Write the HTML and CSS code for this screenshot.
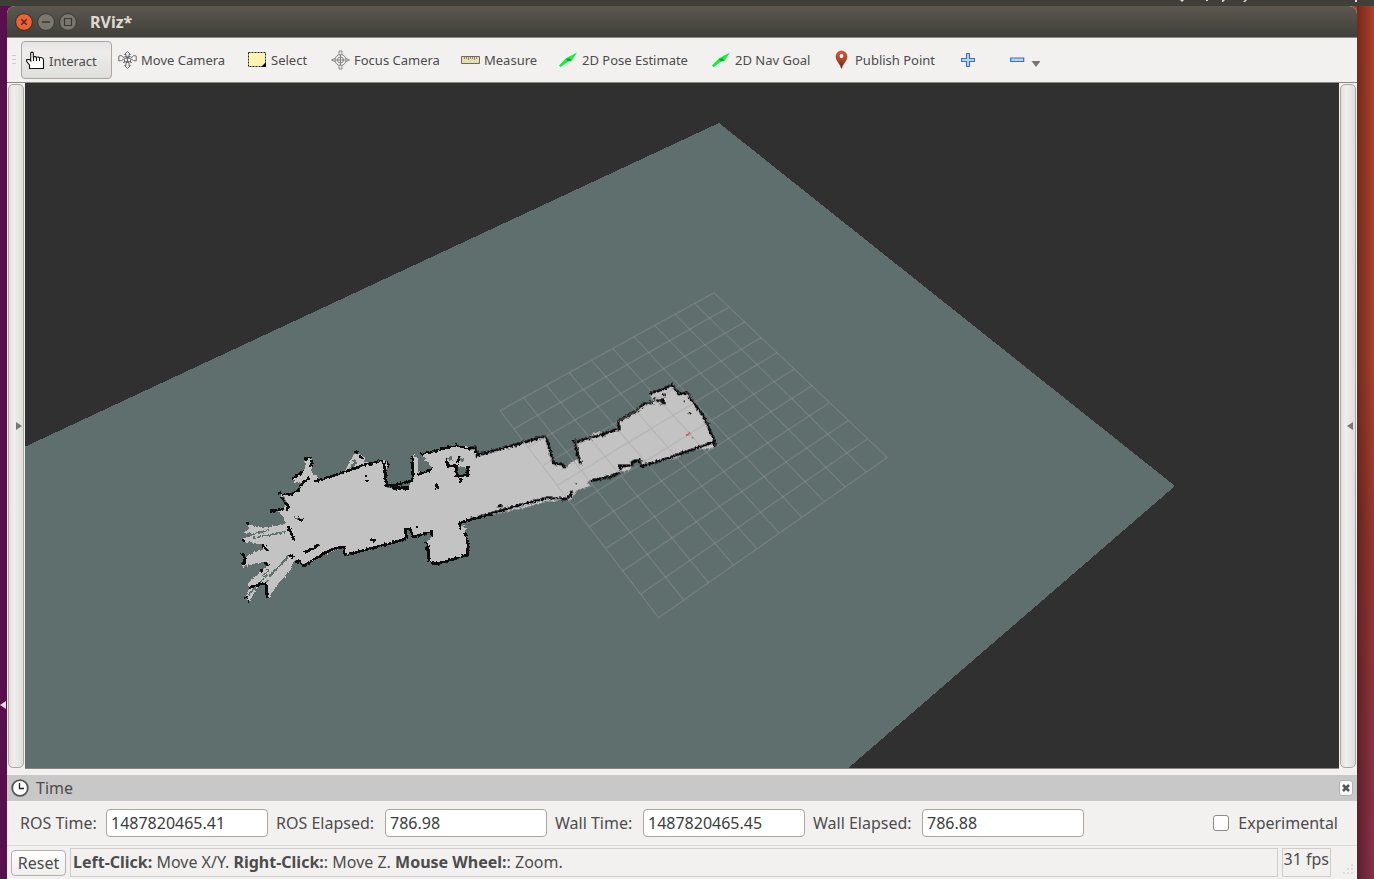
FILE: index.html
```html
<!DOCTYPE html>
<html lang="en">
<head>
<meta charset="utf-8">
<title>RViz*</title>
<link rel="stylesheet" href="styles.css">
</head>
<body>
<div class="panel">
  <svg class="panel-marks" width="190" height="6" viewBox="0 0 190 6" aria-hidden="true"><path d="M0 0h4l-2 2zM26 0h2v1h-2zM42 0h3l-2 2h-1zM65 0h2l-2 2h-2zM175 0h2v2h-2z" fill="#dfdbd2"/></svg>
</div>
<div class="desktop">
  <div class="edge-left"><svg width="6" height="10" viewBox="0 0 6 10"><path d="M6 1v8L0 5z" fill="#e6dde4"/></svg></div>
  <main class="window">
    <header class="titlebar">
      <button class="wm close" aria-label="Close"><svg width="18" height="18" viewBox="0 0 18 18"><circle cx="9" cy="9" r="8.4" fill="#ec6136" stroke="#3b2a22"/><path d="M6.3 6.3l5.4 5.4m0-5.4l-5.4 5.4" stroke="#522a1c" stroke-width="1.5"/></svg></button>
      <button class="wm" aria-label="Minimize"><svg width="18" height="18" viewBox="0 0 18 18"><circle cx="9" cy="9" r="8.4" fill="#79776f" stroke="#393832"/><path d="M5 9h8" stroke="#393832" stroke-width="1.3"/></svg></button>
      <button class="wm" aria-label="Maximize"><svg width="18" height="18" viewBox="0 0 18 18"><circle cx="9" cy="9" r="8.4" fill="#79776f" stroke="#393832"/><path d="M5.5 5.5h7v7h-7z" fill="none" stroke="#393832" stroke-width="1.2"/></svg></button>
      <h1 class="title">RViz*</h1>
    </header>

    <nav class="toolbar" aria-label="Tools">
      <span class="grip"></span>
      <button class="tool active"><svg width="19" height="20" viewBox="0 0 19 20"><path d="M3.500 17.500V14L.7 10.500V8.500h2.800l1.200 1.500V2.200c0-1.500 2.600-1.500 2.600 0V6c1-.6 2.500-.5 3 .4 1-.6 2.500-.5 3 .4 1.200-.6 4.200-.3 4.200 2V17.500z" fill="#fff" stroke="#111" stroke-width="1.100"/><path d="M7.500 6v4M10.500 6.500V10M13.500 7v3" stroke="#111"/></svg><span>Interact</span></button>
      <button class="tool"><svg width="19" height="20" viewBox="0 0 19 20" fill="none" stroke="#6d6d70"><path d="M9.500 1.500L6.500 4.500h1.500v3h3v-3h1.500zM9.500 18.500l-3-3h1.500v-3h3v3h1.500z"/><path d="M5 7.500C7 6 12 6 14 7.500M5 7.500L3.500 5.500.8 6v5l2.700-.5L5 9.500c3-1.800 6-1.800 9 0l1.500 1 2.700.5V6l-2.700-.5L14 7.500M5 12.500c3-1.500 6-1.500 9 0"/><path d="M9.500 7.500v5M6.500 9.500v3M12.500 9.500v3"/></svg><span>Move Camera</span></button>
      <button class="tool"><svg width="19" height="20" viewBox="0 0 19 20"><path d="M.5 2.500h17v14H.5z" fill="#fff3b0" stroke="#222" stroke-dasharray="2 1"/><path d="M18 12v5h-5z"/></svg><span>Select</span></button>
      <button class="tool"><svg width="19" height="20" viewBox="0 0 19 20" fill="none" stroke="#818181"><circle cx="9.500" cy="10" r="5.500"/><circle cx="9.500" cy="10" r="3"/><path d="M9.500 5v10M4.500 10h10"/><path d="M8 4.500V1h3v3.500M8 15.500V19h3v-3.500M4 8.500L.5 10 4 11.500M15 8.500l3.500 1.500-3.500 1.500"/></svg><span>Focus Camera</span></button>
      <button class="tool"><svg width="19" height="20" viewBox="0 0 19 20"><path d="M.5 6.500h18v7H.5z" fill="#e7ddb0" stroke="#6d6a60"/><path d="M3.500 7v2M5.500 7v2M7.500 7v3M9.500 7v2M11.500 7v2M13.500 7v3M15.500 7v2" stroke="#8d897c"/></svg><span>Measure</span></button>
      <button class="tool"><svg width="19" height="20" viewBox="0 0 19 20"><path d="M0 15.500l7-7.200L18 2.500l-6 9-2-.8-8.500 6.600z" fill="#0df23a"/><path d="M7 9l4-.5 1 2.500-3 .5z" fill="#09a92a"/></svg><span>2D Pose Estimate</span></button>
      <button class="tool"><svg width="19" height="20" viewBox="0 0 19 20"><path d="M0 15.500l7-7.200L18 2.500l-6 9-2-.8-8.500 6.600z" fill="#0df23a"/><path d="M7 9l4-.5 1 2.500-3 .5z" fill="#09a92a"/></svg><span>2D Nav Goal</span></button>
      <button class="tool"><svg width="19" height="20" viewBox="0 0 19 20"><defs><linearGradient id="pin" x2="0" y2="1"><stop stop-color="#e0502f"/><stop offset=".5" stop-color="#b0452a"/><stop offset="1" stop-color="#4a2a12"/></linearGradient></defs><path d="M9.500 18.500C8.500 14 4 11 4 6.500a5.500 5.500 0 0 1 11 0C15 11 10.500 14 9.500 18.500z" fill="url(#pin)" stroke="#8a3a22" stroke-width=".6"/><circle cx="9.500" cy="6" r="1.900" fill="#fff"/></svg><span>Publish Point</span></button>
      <button class="tool" aria-label="Add tool"><svg width="14" height="20" viewBox="0 0 14 20"><path d="M5.500 3.500h3v5h5v3h-5v5h-3v-5h-5v-3h5z" fill="#b9d2ef" stroke="#3f6fb2" stroke-width="1.100"/></svg></button>
      <button class="tool more" aria-label="Remove tool"><svg width="30" height="20" viewBox="0 0 30 20"><path d="M.7 8h13v3.500H.7z" fill="#b9d2ef" stroke="#3f6fb2" stroke-width="1.200"/><path d="M21.500 11h9L26 17z" fill="#777"/></svg></button>
    </nav>

    <section class="center">
      <button class="handle" aria-label="Show left panels"><svg width="6" height="10" viewBox="0 0 6 10"><path d="M0 1v8l6-4z" fill="#777"/></svg></button>
      <svg class="scene" viewBox="25 83 1314 686" preserveAspectRatio="xMinYMin slice" role="img" aria-label="Occupancy map">
        <defs>
          <filter id="rough" x="-5%" y="-5%" width="110%" height="110%">
            <feTurbulence type="fractalNoise" baseFrequency=".45" numOctaves="1" seed="4"/>
            <feDisplacementMap in="SourceGraphic" scale="4" xChannelSelector="R" yChannelSelector="G"/>
          </filter>
        </defs>
        <path d="M719 123L1175 486 780 827H-100V505z" fill="#5f6f6d" shape-rendering="crispEdges"/>
        <g filter="url(#rough)">
        <g transform="translate(230 430) scale(.33333)" shape-rendering="crispEdges">
          <path fill="#c3c3c3" d="M225 85L245 85 247 130 265 142 255 154 345 125 358 95 378 68 404 80 405 98 460 92 472 100 470 175 535 172 546 148 548 75 562 78 566 130 604 120 606 112 575 76 610 62 680 42 735 55 745 75 780 66 780 255 740 266 692 278 692 288 715 292 704 302 716 340 712 374 682 384 620 402 598 393 588 340 606 318 602 306 548 322 540 295 525 298 527 328 345 376 343 354 317 360 280 376 222 412 208 396 192 392 178 425 150 455 115 505 112 470 106 456 84 466 56 518 48 500 58 470 52 462 95 420 110 395 60 405 40 410 44 380 96 358 98 344 60 336 40 334 40 325 90 308 40 308 60 296 50 282 100 294 170 282 160 262 148 246 120 245 162 235 168 215 165 200 142 194 180 192 200 184 212 160 185 152 225 118z"/>
          <path fill="#5f6f6d" d="M684 112l28-3v24l-28 3zM652 88l12-10 3 12zM690 82l14 4-8 14zM357 118l18-33 6 18zM190 165l26-14-16 24z"/>
          <g fill="none" stroke="#5f6f6d" stroke-width="5"><path d="M60 315l60-16M70 324l100-20M60 350l34-2M48 462l66-62M55 495l58-62M78 500l36-48M96 436l20-14M118 440l62-66M192 262l12 5"/></g>
          <g fill="none" stroke="#111" stroke-width="8">
            <path d="M253 155l90-28 60-23 57-12M475 95v15M223 86l22-2M245 90v20M225 120l-42 29M238 142l-26 24-6 16-28 12-34-4M154 200l8 14M165 218l10 8-4 16M163 236l-42 9M372 68h12M388 78l10 8" stroke-width="7"/>
            <path d="M462 95l8 75M470 166h20v8h46" stroke-width="10"/>
            <path d="M490 167l58-16V78M564 134l42-16M574 74l36-10 70-18 20 6 32 8 10 16 40-10" stroke-width="7"/>
            <path d="M650 88l4 22 24-4M688 80l-6 18M680 106v30h32v-28M692 148v10M618 162l4 14" stroke-width="8"/>
            <path d="M690 298v-20l50-14 50-10M704 304l10 36-2 34-30 10-62 18-22-8-8-58M606 318l-2-14-55 18-8-26-15 2 4 26-20 8-165 44-2-24-26 2-34 16-62 38-10-8M212 394l-18 0M225 368l45-24M175 375l16 6"/>
            <path d="M174 288l6 16 12 26M96 342l20 22M40 372l5 20-8 12M105 396l8 10M55 282l-6-5M60 472l46-12M108 455l4 50M90 420l8 6M52 500l-3 5M420 328l16 4M408 135v5M410 150v5M204 266l14 6M560 288v5M40 328v8M32 372h8M50 516h6"/>
          </g>
          <g transform="translate(720 -180)">
            <path fill="#c3c3c3" d="M0 240L15 235 20 256 220 200 230 206 250 280 276 280 288 290 320 268 332 280 316 218 356 200 380 184 400 190 447 175 445 155 500 120 520 100 548 94 540 70 605 45 625 72 650 68 700 140 736 215 738 232 680 240 664 238 620 264 515 288 510 270 490 275 480 300 455 304 430 320 352 336 362 348 320 362 300 390 232 394 160 414 0 448z"/>
            <g fill="none" stroke="#111" stroke-width="8">
            <path d="M0 234h16l5 22 200-56 8 4 22 76 26 4 8 10M312 210l20 72M320 216l45-14 30-8 52-18-2-22 30-18 26-14 18-20 32-4M540 70l38-12 28-14 20 28 24-4 50 70 34 75v18M732 216L560 276l-46 12-6-18-20 4-4 12-34 2v12M450 308l-32 12-55 12M306 360l-6 16-10 10-60-2-70 18L0 448"/>
            <path d="M408 318l14 8M560 92l20-3v10h-10M580 70l4 10M448 166l2 14M84 408h12"/>
            <path d="M640 94h5M656 130h5M548 92l8-10M316 342l8-4" stroke-width="5"/>
            <path d="M646 198l14-8" stroke="#c44" stroke-width="5"/><path d="M664 200l6 4" stroke="#2a4" stroke-width="5"/>
            </g>
          </g>
        </g>
        </g>
        <g transform="translate(480 280) scale(.33333)" fill="none" stroke="#a0a0a4" stroke-opacity=".56" stroke-width="3">
          <path d="M60 392L536 1013M131 353L610 959M199 315L686 908M268 278L761 856M334 240L830 806M398 205L897 758M463 171L965 711M524 136L1032 664M584 102L1095 620M644 70L1159 576M702 38L1222 532"/>
          <path d="M60 392L702 38M102 446L747 81M146 500L795 125M188 557L843 173M232 616L891 218M280 677L942 268M328 740L996 317M379 804L1047 369M427 873L1104 422M482 942L1162 477M536 1013L1222 532"/>
        </g>
      </svg>
      <button class="handle right" aria-label="Show right panels"><svg width="6" height="10" viewBox="0 0 6 10"><path d="M6 1v8L0 5z" fill="#777"/></svg></button>
    </section>

    <section class="dock">
      <header class="dock-head">
        <svg width="18" height="18" viewBox="0 0 18 18"><circle cx="9" cy="9" r="7.800" fill="#fff" stroke="#555" stroke-width="1.800"/><path d="M8.500 4v5.500H13" fill="none" stroke="#222" stroke-width="1.300"/></svg>
        <h2>Time</h2>
        <button class="dock-close" aria-label="Close Time panel"><svg width="8" height="8" viewBox="0 0 8 8"><path d="M1 1l6 6M7 1L1 7" stroke="#555" stroke-width="2.600"/></svg></button>
      </header>
      <form class="times">
        <label for="rt">ROS Time:</label><input class="field" id="rt" type="text" value="1487820465.41">
        <label for="re">ROS Elapsed:</label><input class="field" id="re" type="text" value="786.98">
        <label for="wt">Wall Time:</label><input class="field" id="wt" type="text" value="1487820465.45">
        <label for="we">Wall Elapsed:</label><input class="field" id="we" type="text" value="786.88">
        <label class="exp"><input type="checkbox" class="check">Experimental</label>
      </form>
    </section>

    <footer class="status">
      <button class="reset">Reset</button>
      <p class="hint"><b>Left-Click:</b> Move X/Y. <b>Right-Click:</b>: Move Z. <b>Mouse Wheel:</b>: Zoom.</p>
      <span class="fps">31 fps</span>
      <svg class="sizer" width="13" height="13" viewBox="0 0 13 13"><path d="M11 0h2v2h-2zM7 4h2v2H7zM11 4h2v2h-2zM3 8h2v2H3zM7 8h2v2H7zM11 8h2v2h-2z" fill="#dddbd8"/></svg>
    </footer>
  </main>
  <div class="edge-right"></div>
</div>
</body>
</html>
```
FILE: styles.css
```css
* { box-sizing: border-box; }
body {
  margin: 0;
  height: 100vh;
  display: flex;
  flex-direction: column;
  overflow: hidden;
  font-family: "Noto Sans", "Open Sans", sans-serif;
  font-size: 16px;
  color: #4c4c4c;
}
button, input { font: inherit; color: inherit; }
button { background: none; border: 0; padding: 0; }
svg { display: block; flex: none; }

.panel { height: 6px; background: #403e39; display: flex; justify-content: flex-end; }
.panel-marks { margin-right: 4px; }
.desktop {
  flex: 1;
  min-height: 0;
  display: flex;
  background: linear-gradient(90deg, #5a0f4c 50%, transparent 50%), linear-gradient(#b03f2a 0, #a9422b 40%, #97362f 60%, #87304a 100%);
}
.edge-left { width: 7px; padding-top: 694px; }
.edge-right { width: 17px; background: linear-gradient(90deg, rgba(0, 0, 0, .35), transparent); }
.window { flex: 1; min-width: 0; display: flex; flex-direction: column; background: #f2f1f0; border-radius: 8px 8px 0 0; overflow: hidden; }

.titlebar {
  height: 32px;
  flex: none;
  display: flex;
  align-items: center;
  gap: 4px;
  padding: 0 8px;
  background: linear-gradient(#5c5850, #403f3a);
  border-bottom: 1px solid #8b8984;
}
.title { margin: 0 0 0 9px; font-size: 16px; line-height: 20px; font-weight: 700; color: #dfdbd2; }

.toolbar {
  height: 45px;
  flex: none;
  display: grid;
  grid-template-columns: 14px 92px 130px 83px 130px 98px 153px 120px 129px 49px auto;
  align-items: center;
  border-bottom: 1px solid #8b8984;
  font-size: 13px;
}
.grip { width: 4px; height: 10px; margin-left: 5px; background: repeating-linear-gradient(#d0cecb 0 1px, transparent 1px 4px); }
.tool { display: flex; align-items: center; gap: 4px; height: 38px; padding: 0 5px; white-space: nowrap; justify-self: start; }
.tool.active { width: 91px; border: 1px solid #aaa6a0; border-radius: 4px; background: linear-gradient(#e6e5e3, #eeedeb 30%, #dededb); padding: 2px 4px 0; }

.center { flex: 1; min-height: 0; display: flex; }
.scene { flex: 1; min-width: 0; height: 100%; background: #303030; border-bottom: 1px solid #8b8984; }
.handle {
  width: 16px;
  margin: 1px;
  display: flex;
  align-items: center;
  justify-content: flex-end;
  padding-right: 1px;
  border: 1px solid #aaa6a0;
  border-radius: 5px;
  background: linear-gradient(90deg, #e1e0dd, #f0efee 35%, #dededb);
}
.handle.right { padding-right: 2px; }

.dock { flex: none; padding-top: 6px; }
.dock-head { height: 26px; display: flex; align-items: center; gap: 7px; padding: 0 4px; background: #c8c8c8; }
.dock-head h2 { margin: 0; flex: 1; font-size: 16px; line-height: 24px; font-weight: 400; }
.dock-close { width: 14px; height: 16px; display: grid; place-items: center; background: #fafafa; border-radius: 3px; border: 1px solid #b4b2ae; }

.times {
  height: 45px;
  display: grid;
  grid-template-columns: 86px 170px 109px 170px 88px 170px 109px 162px 1fr;
  align-items: center;
  padding: 0 19px 0 13px;
  border-bottom: 1px solid #dad8d5;
  white-space: nowrap;
}
.field { width: 162px; height: 28px; padding: 0 4px; border: 1px solid #aaa6a0; border-radius: 4px; background: #fff; color: #3c3c3c; }
.exp { justify-self: end; display: flex; align-items: center; gap: 9px; }
.check { appearance: none; width: 16px; height: 16px; margin: 0; border: 1px solid #8f8c87; border-radius: 3px; background: #fff; }

.status { height: 33px; flex: none; display: flex; align-items: center; gap: 4px; padding: 0 4px; }
.reset { width: 55px; height: 26px; border: 1px solid #b4b0aa; border-radius: 4px; background: linear-gradient(#fff, #f0efee); }
.hint, .fps { height: 29px; line-height: 27px; border: 1px solid #cfcdca; white-space: nowrap; }
.hint { flex: 1; margin: 0; padding: 0 2px; }
.fps { line-height: 20px; padding: 0 1px; }
.sizer { align-self: flex-end; margin: 0 0 2px 5px; }
```
